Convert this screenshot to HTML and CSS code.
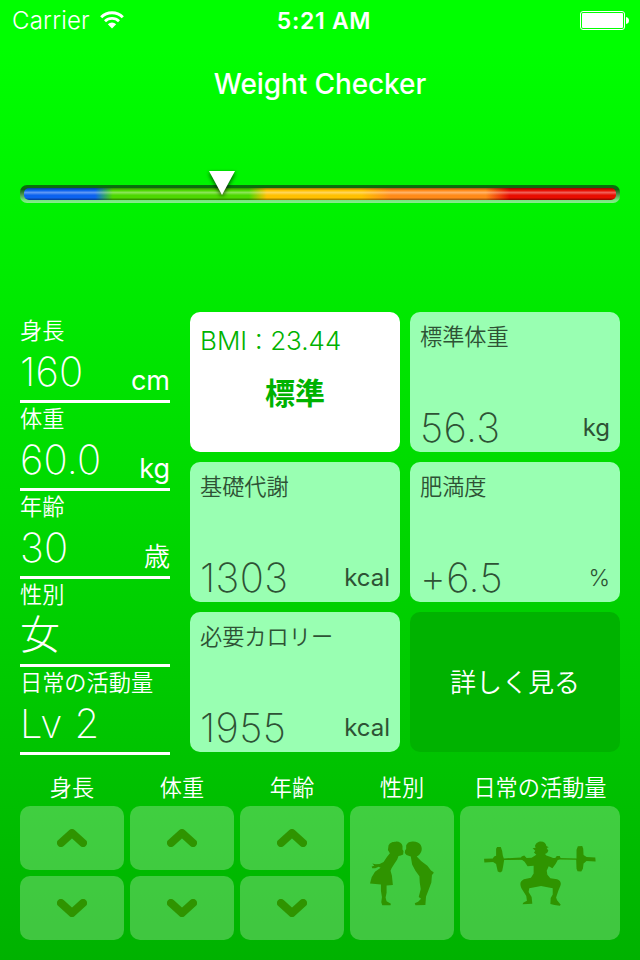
FILE: index.html
```html
<!DOCTYPE html>
<html lang="ja">

<head>
    <meta charset="UTF-8">
    <meta name="viewport" content="width=device-width, initial-scale=1.0">
    <title>Weight Checker</title>
    <link rel="stylesheet" href="styles.css">
</head>

<body>
    <div class="status-bar">
        <div class="carrier">
            <span class="carrier-name">Carrier</span>
            <svg class="wifi" width="24" height="18" viewBox="0 0 24 18">
                <path d="M1.2 6.2 A15.2 15.2 0 0 1 22.8 6.2" fill="none" stroke="#fff" stroke-width="3"/>
                <path d="M5 10.2 A10 10 0 0 1 19 10.2" fill="none" stroke="#fff" stroke-width="2.8"/>
                <path d="M12 17.6 L7.8 13.2 A6 6 0 0 1 16.2 13.2 Z" fill="#fff"/>
            </svg>
        </div>
        <div class="time">5:21 AM</div>
        <div class="battery">
            <svg width="49" height="19" viewBox="0 0 49 19">
                <rect x=".5" y=".5" width="44" height="18" rx="2.5" fill="none" stroke="#fff"/>
                <rect x="2" y="2" width="41" height="15" rx="1" fill="#fff"/>
                <path d="M46 6 Q49 6.5 49 9.5 Q49 12.5 46 13 Z" fill="#fff"/>
            </svg>
        </div>
    </div>
    <h1>Weight Checker</h1>

    <div class="meter">
        <div class="meter-bar"></div>
        <svg class="marker" width="36" height="36" viewBox="0 0 36 36">
            <path d="M5 3 H31 L18 27 Z" fill="#fff"/>
        </svg>
    </div>

    <div class="main">
        <div class="profile">
            <div class="item">
                <div class="label">身長</div>
                <div class="row"><span class="value">160</span><span class="unit">cm</span></div>
            </div>
            <div class="item">
                <div class="label">体重</div>
                <div class="row"><span class="value">60.0</span><span class="unit">kg</span></div>
            </div>
            <div class="item">
                <div class="label">年齢</div>
                <div class="row"><span class="value">30</span><span class="unit age">歳</span></div>
            </div>
            <div class="item">
                <div class="label">性別</div>
                <div class="row"><span class="value gender">女</span></div>
            </div>
            <div class="item">
                <div class="label">日常の活動量</div>
                <div class="row"><span class="value level">Lv 2</span></div>
            </div>
        </div>

        <div class="cards">
            <div class="card bmi">
                <div class="bmi-value">BMI<span class="colon">：</span>23.44</div>
                <div class="bmi-result">標準</div>
            </div>
            <div class="card">
                <div class="label">標準体重</div>
                <div class="row"><span class="value">56.3</span><span class="unit">kg</span></div>
            </div>
            <div class="card">
                <div class="label">基礎代謝</div>
                <div class="row"><span class="value">1303</span><span class="unit">kcal</span></div>
            </div>
            <div class="card">
                <div class="label">肥満度</div>
                <div class="row"><span class="value">+6.5</span><span class="unit percent">%</span></div>
            </div>
            <div class="card">
                <div class="label">必要カロリー</div>
                <div class="row"><span class="value">1955</span><span class="unit">kcal</span></div>
            </div>
            <button type="button" class="card more">詳しく見る</button>
        </div>
    </div>

    <div class="controls">
        <div class="control">
            <div class="label">身長</div>
            <button type="button"><svg class="arrow" viewBox="0 0 30 18"><path d="M4 14 L15 4 L26 14"/></svg></button>
            <button type="button"><svg class="arrow" viewBox="0 0 30 18"><path d="M4 4 L15 14 L26 4"/></svg></button>
        </div>
        <div class="control">
            <div class="label">体重</div>
            <button type="button"><svg class="arrow" viewBox="0 0 30 18"><path d="M4 14 L15 4 L26 14"/></svg></button>
            <button type="button"><svg class="arrow" viewBox="0 0 30 18"><path d="M4 4 L15 14 L26 4"/></svg></button>
        </div>
        <div class="control">
            <div class="label">年齢</div>
            <button type="button"><svg class="arrow" viewBox="0 0 30 18"><path d="M4 14 L15 4 L26 14"/></svg></button>
            <button type="button"><svg class="arrow" viewBox="0 0 30 18"><path d="M4 4 L15 14 L26 4"/></svg></button>
        </div>
        <div class="control">
            <div class="label">性別</div>
            <button type="button" class="tall">
                <svg width="64" height="65" viewBox="75 122 193 194" fill="#2f9400">
                    <!-- girl -->
                    <path d="M153 123 C162 122 171 127 173 136 L173 147 L176 151 L175 162 L168 165 L161 166 L157 177 L148 190 L140 203 L137 211 L141 225 L144 254 L125 255 L125 277 L122 291 L125 303 L138 310 L137 315 L112 315 L109 306 L111 290 L108 272 L108 252 L75 249 L80 230 L90 214 L107 202 L101 199 L91 203 L82 203 L80 198 L88 196 L82 189 L92 191 L104 190 L116 184 L126 169 L135 158 L129 148 L131 134 C135 125 144 123 153 123 Z"/>
                    <!-- boy -->
                    <path d="M199 123 C212 121 223 125 228 133 C234 144 231 156 222 164 L216 168 L229 181 L248 196 L259 210 L267 215 L265 221 L262 222 L260 246 L251 270 L244 288 L242 314 L212 315 L210 309 L220 304 L229 295 L222 290 L228 266 L225 246 L224 227 L212 211 L202 192 L198 168 L185 163 L180 157 L181 149 L184 145 L184 134 C188 126 193 123 199 123 Z"/>
                </svg>
            </button>
        </div>
        <div class="control wide">
            <div class="label">日常の活動量</div>
            <button type="button" class="tall">
                <svg width="112" height="65" viewBox="72 122 334 194" fill="#2f9400">
                    <!-- barbell -->
                    <path d="M72 175 L98 174 L102 168 L108 166 L108 145 L111 140 L122 140 L126 152 L128 165 L131 174 L182 171 L200 173 L290 173 L348 174 L348 148 L352 138 L365 137 L368 145 L369 164 L378 170 L404 171 L405 183 L378 182 L369 189 L367 205 L362 213 L351 212 L348 205 L347 178 L300 177 L200 178 L132 179 L129 197 L126 212 L120 216 L113 213 L109 196 L108 191 L99 185 L73 186 Z"/>
                    <!-- lifter -->
                    <path d="M236 124 C248 121 257 128 258 137 L265 141 L259 143 L264 151 L260 158 L254 161 L258 165 L271 170 L283 175 L289 167 L298 167 L301 174 L292 179 L286 190 L276 203 L265 197 L259 211 L261 223 L270 233 L290 236 C300 239 304 248 299 258 L294 270 L287 291 L290 299 L301 312 L298 315 L282 313 L270 310 L271 292 L277 282 L277 263 L242 256 L207 263 L205 274 L214 289 L216 309 L187 311 L189 306 L200 300 L198 286 L184 264 C177 248 181 241 191 236 L212 232 L220 219 L220 196 L202 197 L193 184 L181 175 L184 168 L192 165 L199 173 L214 172 L228 163 L221 156 L225 151 L217 144 L226 142 L224 137 C226 130 230 126 236 124 Z"/>
                </svg>
            </button>
        </div>
    </div>
</body>

</html>
```
FILE: styles.css
```css
* {
    box-sizing: border-box;
}

body {
    font-family: Inter, "Noto Sans CJK JP", sans-serif;
    font-weight: 300;
    background: linear-gradient(to bottom, #00ff00 0%, #00ff00 5%, #00b200 100%);
    color: white;
    margin: 0;
    height: 960px;
    overflow: hidden;
}

.status-bar {
    display: grid;
    grid-template-columns: 1fr auto 1fr;
    align-items: center;
    height: 40px;
    padding: 1px 11px 0 12px;
    font-size: 24px;
    line-height: 40px;
}

.carrier {
    display: flex;
    align-items: center;
    gap: 10px;
    letter-spacing: .2px;
}

.wifi {
    margin-top: -2px;
}

.time {
    font-size: 23px;
    font-weight: 600;
    letter-spacing: .7px;
    padding-left: 7px;
}

.battery {
    display: flex;
    justify-content: flex-end;
    padding-bottom: 1px;
}

h1 {
    margin: 24px 0 0;
    height: 40px;
    line-height: 40px;
    font-size: 28px;
    font-weight: 500;
    letter-spacing: -.1px;
    text-align: center;
}

.meter {
    position: relative;
    margin: 81px 20px 0;
    height: 18px;
    padding: 3px 4px;
    border-radius: 7px;
    background: linear-gradient(to bottom, #08720c, #0d650f 25%, #449046 50%, #75e87c 85%, #8aea8e);
}

.meter-bar {
    height: 12px;
    border-radius: 5px;
    background:
        linear-gradient(to bottom, rgba(0, 0, 0, .35), rgba(0, 0, 0, 0) 20%, rgba(255, 255, 255, .35) 38%, rgba(255, 255, 255, 0) 60%, rgba(0, 0, 0, 0) 80%, rgba(0, 0, 0, .4)),
        linear-gradient(to right, #0b62f0 0 12%, #4dd800 15%, #4dd800 38%, #ffc000 41%, #ffc000 57%, #ff8a18 62%, #ff8a18 78%, #e80c00 82%);
}

.marker {
    position: absolute;
    left: 184px;
    top: -17px;
    filter: drop-shadow(0 2px 2px rgba(0, 0, 0, .7));
}

.main {
    display: flex;
    gap: 20px;
    margin: 109px 20px 0;
}

.profile {
    width: 150px;
    padding-top: 3px;
}

.item {
    height: 88px;
    border-bottom: 3px solid white;
}

.label {
    font-size: 22.2px;
    font-weight: 350;
    line-height: 30px;
    white-space: nowrap;
}

.item .label {
    line-height: 32px;
    height: 30px;
}

.row {
    display: flex;
    justify-content: space-between;
}

.value {
    font-size: 40px;
    line-height: 54px;
    font-weight: 240;
    letter-spacing: .2px;
}

.gender {
    font-weight: 300;
    line-height: 52px;
}

.level {
    letter-spacing: .5px;
}

.item .unit {
    font-size: 27px;
    line-height: 30px;
    padding-top: 21px;
    font-weight: 400;
}

.item .age {
    font-size: 26px;
    font-weight: 350;
}

.cards {
    display: grid;
    grid-template-columns: 210px 210px;
    grid-auto-rows: 140px;
    gap: 10px;
}

.card {
    display: flex;
    flex-direction: column;
    justify-content: space-between;
    padding: 10px 10px 0;
    border: none;
    border-radius: 10px;
    background: #99ffb2;
    color: #2e5235;
}

.card .row {
    height: 51px;
}

.card .value {
    letter-spacing: .4px;
}

.card .unit {
    font-size: 24px;
    line-height: 30px;
    padding-top: 12px;
    font-weight: 380;
}

.card .percent {
    font-weight: 300;
    font-size: 23px;
}

.bmi {
    justify-content: flex-start;
    background: white;
    color: #00b200;
}

.bmi-value {
    font-size: 26px;
    line-height: 38px;
    white-space: nowrap;
}

.colon {
    font-size: 23px;
}

.bmi-result {
    font-size: 30px;
    line-height: 44px;
    margin-top: 10px;
    font-weight: 700;
    text-align: center;
}

.more {
    justify-content: center;
    align-items: center;
    padding: 0 0 4px;
    font: inherit;
    font-size: 26px;
    font-weight: 350;
    background: #00b200;
    color: white;
}

.controls {
    display: flex;
    gap: 6px;
    margin: 17px 20px 0;
}

.control {
    display: flex;
    flex-direction: column;
    gap: 6px;
    width: 104px;
}

.control.wide {
    width: 160px;
}

.control .label {
    height: 28px;
    line-height: 32px;
    text-align: center;
}

.control button {
    display: flex;
    align-items: center;
    justify-content: center;
    height: 64px;
    padding: 0;
    border: none;
    border-radius: 10px;
    background: rgba(255, 255, 255, .25);
}

.control .tall {
    height: 134px;
}

.arrow {
    width: 30px;
    height: 18px;
    fill: none;
    stroke: #2f9400;
    stroke-width: 8;
    stroke-linecap: round;
    stroke-linejoin: round;
}
```
